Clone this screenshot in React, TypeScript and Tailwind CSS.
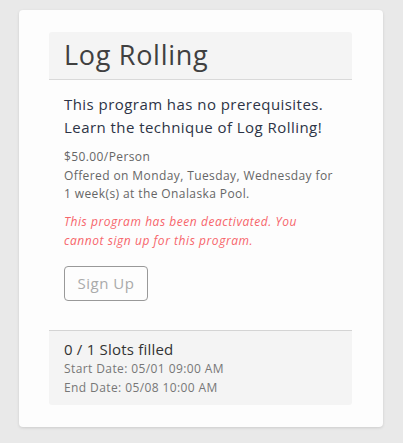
import React from "react";

export default function App() {
  return (
    <div
      className="min-h-[443px] bg-[#e9e9e9] pt-[10px] pl-[19px] pr-[20px]"
      style={{ fontFamily: '"Open Sans", sans-serif' }}
    >
      <div className="bg-[#fdfdfd] rounded-[4px] shadow-[0_1px_3px_rgba(0,0,0,0.12)] pl-[30px] pr-[31px] pt-[22px] pb-[22px]">
        <div className="bg-[#f4f4f4] rounded-t-[3px] border-b border-[#d9d9d9] h-[48px] pl-[15px] flex items-center text-[27px] text-[#404040] tracking-[0.7px]">
          Log Rolling
        </div>
        <div className="px-[15px] pt-[13px] pb-[29px]">
          <p className="text-[15px] leading-[23px] text-[#2d3446] tracking-[0.45px]">
            This program has no prerequisites. Learn the technique of Log Rolling!
          </p>
          <div className="mt-[9px] text-[12px] leading-[18.5px] text-[#666] tracking-[0.4px]">
            <div>$50.00/Person</div>
            <div>Offered on Monday, Tuesday, Wednesday for 1 week(s) at the Onalaska Pool.</div>
          </div>
          <p className="mt-[8px] text-[12px] leading-[19px] italic text-[#f7656b] tracking-[0.55px]">
            This program has been deactivated. You cannot sign up for this program.
          </p>
          <button className="mt-[16px] h-[35px] w-[84px] border border-[#999] rounded-[4px] text-[15px] text-[#aaa] tracking-[0.5px]">
            Sign Up
          </button>
        </div>
        <div className="bg-[#f4f4f4] border-t border-[#d4d4d4] rounded-b-[3px] px-[15px] pt-[8px] pb-[8px]">
          <div className="text-[15px] leading-[20px] text-[#333] tracking-[0.2px]">0 / 1 Slots filled</div>
          <div className="text-[12px] leading-[19px] text-[#777] tracking-[0.4px]">Start Date: 05/01 09:00 AM</div>
          <div className="text-[12px] leading-[19px] text-[#777] tracking-[0.4px]">End Date: 05/08 10:00 AM</div>
        </div>
      </div>
    </div>
  );
}
